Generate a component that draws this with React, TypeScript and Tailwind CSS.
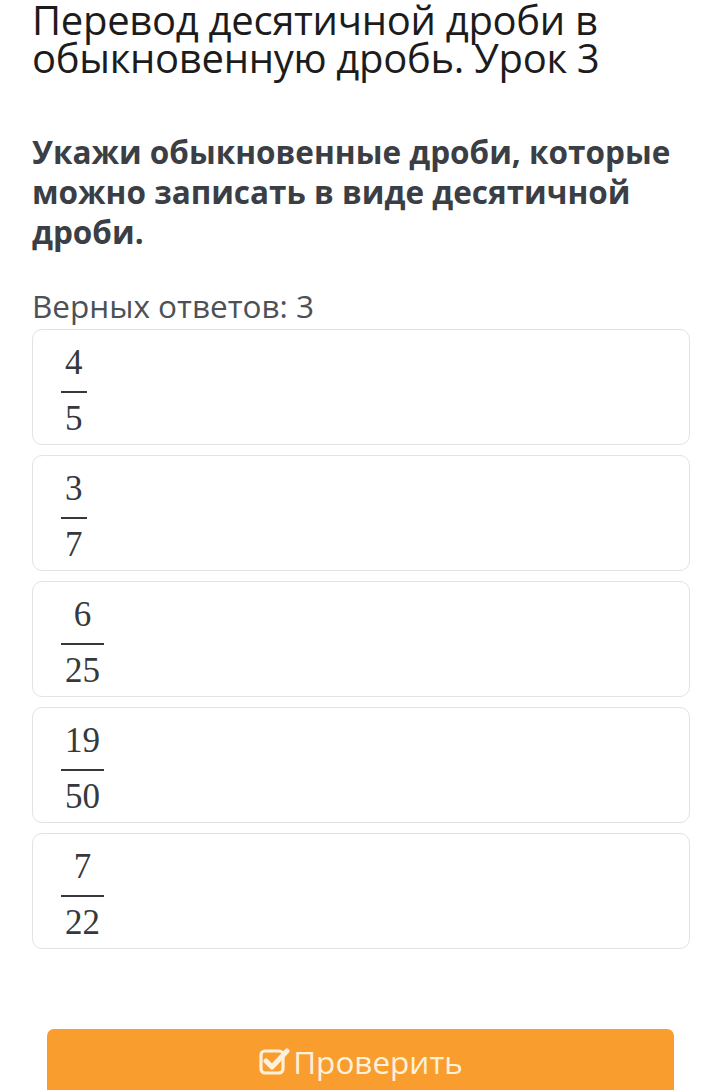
import React from "react";

const fractions: [string, string][] = [
  ["4", "5"],
  ["3", "7"],
  ["6", "25"],
  ["19", "50"],
  ["7", "22"],
];

function Fraction({ n, d }: { n: string; d: string }) {
  return (
    <div className="inline-flex flex-col items-stretch text-[35px] leading-[36px] text-[#35393d]" style={{ fontFamily: '"Liberation Serif", "DejaVu Serif", serif' }}>
      <span className="text-center px-[4px]">{n}</span>
      <span className="h-[2px] bg-[#35393d] mt-[10px] mb-[8px]"></span>
      <span className="text-center px-[4px]">{d}</span>
    </div>
  );
}

export default function App() {
  return (
    <div className="w-[720px] h-[1090px] overflow-hidden bg-white relative" style={{ fontFamily: '"Open Sans", "Noto Sans", sans-serif' }}>
      <div className="px-[32px]">
        <h1 className="text-[40px] leading-[38px] text-[#1c1c1c] mt-[1px] tracking-[-0.3px]">
          Перевод десятичной дроби в обыкновенную дробь. Урок 3
        </h1>
        <p className="mt-[55px] text-[31.5px] leading-[40px] font-bold text-[#3b3f45]">
          Укажи обыкновенные дроби, которые можно записать в виде десятичной дроби.
        </p>
        <p className="mt-[37px] text-[31.5px] leading-[34px] text-[#4d5156]">Верных ответов: 3</p>
        <div className="mt-[6px] w-[658px] flex flex-col gap-[10px]">
          {fractions.map(([n, d], i) => (
            <div key={i} className="h-[116px] border border-[#e3e3e3] rounded-[10px] pl-[28px] pt-[15px]">
              <Fraction n={n} d={d} />
            </div>
          ))}
        </div>
      </div>
      <div className="mt-[80px] mx-[47px] w-[627px] h-[80px] bg-[#f99e2e] rounded-[7px] flex items-start justify-center pt-[13px]">
        <div className="flex items-center gap-[3px] text-[#fdf1dc]">
          <svg width="32" height="32" viewBox="0 0 32 32" fill="none">
            <rect x="3" y="5" width="22" height="22" rx="4" stroke="#fdf1dc" strokeWidth="3.2" />
            <path d="M8 15 L14 21 L29 5" stroke="#fdf1dc" strokeWidth="5" strokeLinecap="round" strokeLinejoin="round" />
          </svg>
          <span className="text-[31.5px] leading-[40px]">Проверить</span>
        </div>
      </div>
    </div>
  );
}
